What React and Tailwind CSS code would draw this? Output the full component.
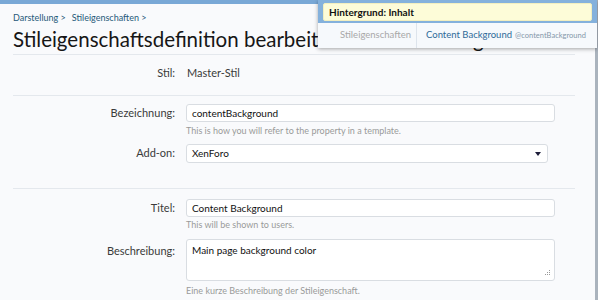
export default function App() {
  const font = { fontFamily: "Lato, 'Open Sans', sans-serif" };
  return (
    <div className="relative w-[598px] h-[300px] overflow-hidden bg-[#f9fafc] flex" style={font}>
      <div className="flex-1 flex flex-col">
        <div className="h-[4px] bg-[#79a8d6]" />
        <div className="pl-[13px] pr-[20px]">
          <div className="mt-[8px] h-[12px] leading-[12px] text-[9px] text-[#26597a] flex gap-[6px]">
            <span>Darstellung &gt;</span>
            <span>Stileigenschaften &gt;</span>
          </div>
          <div className="mt-[3px] h-[24px] leading-[24px] text-[20.5px] text-[#161616] whitespace-nowrap">
            Stileigenschaftsdefinition bearbeiten: Content Background
          </div>
          <div className="mt-[3px] border-b border-[#e4e8ed]" />
          {/* Stil row */}
          <div className="flex items-center mt-[11px] h-[14px]">
            <div className="w-[162px] text-right text-[11px] text-[#3a3a3a]">Stil:</div>
            <div className="ml-[12px] text-[11px] text-[#3a3a3a]">Master-Stil</div>
          </div>
          <div className="mt-[15px] border-b border-[#e4e8ed]" />
          {/* Bezeichnung */}
          <div className="flex items-center mt-[8px]">
            <div className="w-[162px] text-right text-[11px] text-[#3a3a3a]">Bezeichnung:</div>
            <div className="ml-[11px] w-[369px] h-[18px] bg-white border border-[#d9dde2] rounded-[3px] flex items-center pl-[5px] text-[10px] text-[#111]">
              contentBackground
            </div>
          </div>
          <div className="ml-[173px] mt-[3px] h-[12px] leading-[12px] text-[9px] text-[#9a9a9a]">
            This is how you will refer to the property in a template.
          </div>
          <div className="flex items-center mt-[7px]">
            <div className="w-[162px] text-right text-[11px] text-[#3a3a3a]">Add-on:</div>
            <div className="ml-[11px] w-[362px] h-[19px] bg-white border border-[#d9dde2] rounded-[3px] flex items-center justify-between pl-[5px] pr-[6px] text-[10px] text-[#111]">
              <span>XenForo</span>
              <svg width="6" height="4" viewBox="0 0 6 4">
                <path d="M0 0 L6 0 L3 4 Z" fill="#1d1d3a" />
              </svg>
            </div>
          </div>
          <div className="mt-[25px] border-b border-[#e4e8ed]" />
          {/* Titel */}
          <div className="flex items-center mt-[10px]">
            <div className="w-[162px] text-right text-[11px] text-[#3a3a3a]">Titel:</div>
            <div className="ml-[11px] w-[369px] h-[18px] bg-white border border-[#d9dde2] rounded-[3px] flex items-center pl-[5px] text-[10px] text-[#111]">
              Content Background
            </div>
          </div>
          <div className="ml-[173px] mt-[2px] h-[12px] leading-[12px] text-[9px] text-[#9a9a9a]">
            This will be shown to users.
          </div>
          <div className="flex items-start mt-[8px]">
            <div className="w-[162px] pt-[4px] text-right text-[11px] text-[#3a3a3a]">Beschreibung:</div>
            <div className="relative ml-[11px] w-[369px] h-[42px] bg-white border border-[#d9dde2] rounded-[3px] pl-[5px] pt-[3px] text-[10px] text-[#111]">
              Main page background color
              <svg className="absolute right-[3px] bottom-[3px]" width="7" height="7" viewBox="0 0 7 7">
                <rect x="5" y="0" width="1" height="1" fill="#999" />
                <rect x="3" y="2" width="1" height="1" fill="#999" />
                <rect x="5" y="2" width="1" height="1" fill="#999" />
                <rect x="1" y="4" width="1" height="1" fill="#999" />
                <rect x="3" y="4" width="1" height="1" fill="#999" />
                <rect x="5" y="4" width="1" height="1" fill="#999" />
              </svg>
            </div>
          </div>
          <div className="ml-[173px] mt-[4px] h-[12px] leading-[12px] text-[9px] text-[#9a9a9a]">
            Eine kurze Beschreibung der Stileigenschaft.
          </div>
        </div>
      </div>
      <div className="w-[3px] bg-[#aab3bd]" />

      {/* tooltip */}
      <div className="absolute left-[318px] top-0 w-[279px] h-[48px] bg-[#84b1dc] shadow-[0_1px_4px_rgba(0,0,0,0.35)] flex flex-col">
        <div className="mx-[5px] mt-[3px] h-[18px] bg-[#fdfcd8] border border-[#f2efc0] rounded-[2px] flex items-center pl-[5px] text-[10px] font-bold text-[#111]">
          Hintergrund: Inhalt
        </div>
        <div className="mt-[2px] flex-1 bg-[#f6f9fc] flex items-center">
          <div className="w-[99px] h-full flex items-center justify-end pr-[5px] text-[9.5px] text-[#a8a8a8] border-r border-[#dde4ec]">
            Stileigenschaften
          </div>
          <div className="pl-[9px] flex items-baseline gap-[3px]">
            <span className="text-[9.5px] text-[#2e6a99]">Content Background</span>
            <span className="text-[7.5px] text-[#8598aa]">@contentBackground</span>
          </div>
        </div>
      </div>
    </div>
  );
}
